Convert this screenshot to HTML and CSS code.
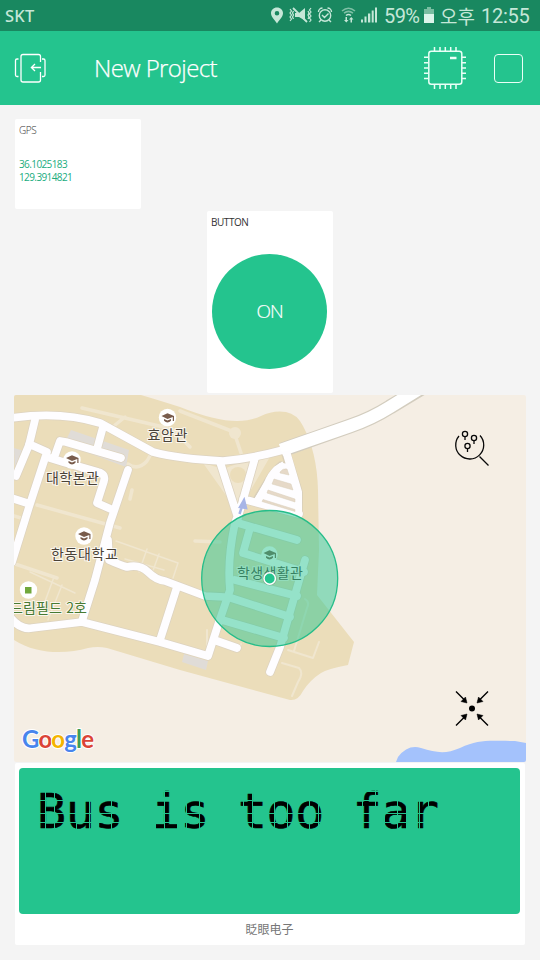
FILE: index.html
```html
<!DOCTYPE html>
<html lang="ko">
<head>
<meta charset="utf-8">
<title>New Project</title>
<link rel="stylesheet" href="styles.css">
</head>
<body>
<div class="status">
  <span class="carrier">SKT</span>
  <svg class="status-icons" width="110" height="31" viewBox="270 0 110 31">
    <path fill="#c5e7d8" fill-rule="evenodd" d="M277 7.500C273.500 7.500 271 10 271 13.300C271 17 275 20 277 23.500C279 20 283 17 283 13.300C283 10 280.500 7.500 277 7.500ZM277 11A2.300 2.300 0 1 1 277 15.600A2.300 2.300 0 1 1 277 11Z"/>
    <g fill="none" stroke="#c5e7d8" stroke-width="1.200">
      <path d="M290 9l1.500 2-1.500 2 1.500 2-1.500 2 1.500 2-1.500 2M293.500 11l-1 2 1 2-1 2 1 2M311 8l-1.500 2 1.500 2-1.500 2 1.500 2-1.500 2 1.500 2-1.500 2M308 11l1 2-1 2 1 2-1 2"/>
      <path d="M293 8l14 14" stroke-width="1.800"/>
      <circle cx="325" cy="15.500" r="5.700" stroke-width="1.400"/>
      <path d="M322 15l2.500 2.500 4-4M318.500 12a4 4 0 0 1 4-4M331.500 12a4 4 0 0 0-4-4M321 20l-2 2M329 20l2 2" stroke-width="1.400"/>
    </g>
    <path fill="#c5e7d8" d="M295 13h4l6-5v12.500l-6-3.500h-4zM361 22.500v-3h2v3zM364.500 22.500v-6h2v6zM368 22.500v-9h2.300v9zM371.700 22.500V10.500h2V22.500zM375 22.500v-15h2v15z"/>
    <g fill="none" stroke="#7fc0a5" stroke-width="1.500"><path d="M342 11Q348.500 5.500 355 11"/><path d="M344 13.200Q348.500 9.500 353 13.200"/><path d="M346 15.500Q348.500 13.500 351 15.500" stroke="#c5e7d8"/></g>
    <path fill="#c5e7d8" d="M345.500 17h1.500v3h1.500l-2.200 2.500-2.300-2.500h1.500zM350.500 22.500v-3H349l2.200-2.500 2.300 2.500H352v3z"/>
  </svg>
  <span class="percent">59%</span>
  <svg class="battery" width="10" height="31" viewBox="0 0 10 31"><path fill="#79bda1" d="M3 7h4v2h3v5H0V9h3z"/><path fill="#dcf4ea" d="M0 14h10v9H0z"/></svg>
  <span class="ampm">오후</span>
  <span class="clock">12:55</span>
</div>
<header class="bar">
  <svg class="exit" width="32" height="32" viewBox="14 52 32 32" fill="none" stroke="#fff" stroke-width="1.300">
    <path d="M40.500 62V56.500a2 2 0 0 0-2-2H23a2 2 0 0 0-2 2V80a2 2 0 0 0 2 2h15.500a2 2 0 0 0 2-2V72M41 67.500H31.500M35 64l-3.600 3.500L35 71M18.500 59H17a1.500 1.500 0 0 0-1.500 1.500v14.500a1.500 1.500 0 0 0 1.500 1.500h1.500M42 59h1.500a1.500 1.500 0 0 1 1.500 1.500v14.500a1.500 1.500 0 0 1-1.500 1.500H42"/>
  </svg>
  <h1 class="title">New Project</h1>
  <svg class="chip" width="42" height="42" viewBox="424 47 42 42" fill="none" stroke="#eafff7" stroke-width="1.500">
    <rect x="428.800" y="51.300" width="33" height="33" rx="2.500"/>
    <path d="M434.500 47v4M440 47v4M445.300 47v4M450.700 47v4M456 47v4M434.500 85v4M440 85v4M445.300 85v4M450.700 85v4M456 85v4M424 57.300h4M424 62.700h4M424 68h4M424 73.300h4M424 78.500h4M462 57.300h4M462 62.700h4M462 68h4M462 73.300h4M462 78.500h4"/>
    <path d="M450 58h6.500" stroke-width="2.500"/>
  </svg>
  <span class="stop"></span>
</header>
<main class="board">
  <section class="card gps"><h2 class="label">GPS</h2><p class="coords">36.1025183<br>129.3914821</p></section>
  <section class="card push"><h2 class="label">BUTTON</h2><button class="round">ON</button></section>
  <section class="map">
    <svg width="512" height="367" viewBox="14 395 512 367">
      <defs>
        <g id="roads" fill="none" stroke-linecap="round" stroke-linejoin="round">
          <path d="M12 418Q60 411 100 423Q120 434 153 452Q180 459 223 461Q250 459 283 450"/>
          <path d="M35 420L29 445L16 476M29 444L47 452L29 507L12 562M50 458L63 462L98 472Q106 474 104 481L97 503L113 510M54 458L60 441L66 442L121 458M103 427L97 449M128 470L110 523L95 580L82 621M8 497L30 504"/>
          <path d="M108 540L109 560Q120 565 127 567Q140 564 148 572Q156 580 165 581L205 596L224 597M10 617Q20 630 32 628L82 622L160 642L208 656L218 625L230 590Q227 560 235 523L238 515M177 587L160 640M220 462L238 518M255 458L243 500L238 517M243 499L299 514M217 641L237 648M305 560L280 647L270 672"/>
          <path d="M238 523L297 540M250 528L243 553L304 572M235 580L297 596M228 597L290 617M222 620L284 638"/>
        </g>
      </defs>
      <path fill="#f5eee4" d="M14 395h512v367H14z"/>
      <path fill="#ebddba" d="M14 395H141Q158 400 180 407Q215 421 237 421Q251 421 261 416Q273 410 286 412Q297 414 303 426Q317 452 318 490L319 550L317 595L354 642L348 665Q327 669 321 673Q310 680 303 691Q298 701 290 700L180 670L107 648Q98 646 88 648C67 654 37 655 14 640Z"/>
      <g fill="none" stroke="#f0e6cf" stroke-width="3.500" stroke-linecap="round" stroke-linejoin="round">
        <path d="M82 408L172 429L190 447M180 411L234 432L241 453M115 425L125 417M128 464Q138 471 147 461L151 454M37 505L120 528M12 563L57 578M130 499L132 490M195 541L220 542M14 516L21 518"/>
        <path stroke-width="1.500" d="M116 541L178 563L173 578M147 549L139 572M159 554L151 576M125 559L164 570M30 572L75 593M62 585L48 620M40 615L54 577"/>
        <path stroke-width="2" d="M305 599Q310 602 307 608L294 651M288 650L313 658L319 642M282 663L299 668Q304 673 298 682L292 696M236 650L241 644M207 630V646"/>
      </g>
      <g fill="#f0e6cf"><circle cx="235" cy="433" r="6"/><path d="M203 463l20 6 22-8 26-6-23 40-8 20z"/></g>
      <circle cx="238" cy="475" r="8" fill="#ebddba"/>
      <path fill="#e0dcd7" d="M71 430l58 20-3 17-62-23zM14 448l10 3-9 22zM184 654l24 7-2 9-24-8z"/>
      <use href="#roads" stroke="#ddd3c0" stroke-width="9.300"/>
      <path fill="none" stroke="#d3cdbf" stroke-width="15" d="M282 450L350 426Q371 419 390 407L425 386"/>
      <path fill="none" stroke="#d9cfba" stroke-width="9.500" stroke-linejoin="round" d="M285 450L298 492V512"/>
      <path fill="#fefdff" stroke="#d9cfba" stroke-width="1.500" d="M280 462L288 463L302 493L301 515L252 501L268 475Q273 467 280 462Z"/>
      <use href="#roads" stroke="#fefdff" stroke-width="7.700"/>
      <path fill="none" stroke="#fff" stroke-width="12.500" d="M281 450L350 426Q371 419 390 407L427 384"/>
      <path fill="none" stroke="#fefdff" stroke-width="8" stroke-linejoin="round" d="M286 451L298 492V512"/>
      <path d="M284 464l-8 5q-6 6-9 14l-10 18" fill="none" stroke="#fefdff" stroke-width="6"/>
      <g fill="#e6d9c8" stroke="#d9cfba" stroke-width=".5"><path d="M280 472q3-4 7-3l2 6-9-2zM274 479l17 5 2 6-21-6z"/><path d="M268 490l27 9v3l-28-9zM263 499.500l32 10v2l-33-10z"/></g>
      <path d="M239.500 514L243 503M240 507L244 500L246 508Z" fill="#a7b5e7" stroke="#a7b5e7" stroke-width="2.500"/>
      <path fill="#a4c2fc" d="M396 762L398 757Q408 744 421 748C437 753 446 754 460 748C480 739 487 741 515 741L526 743V762Z"/>
      <g fill="#fff"><circle cx="167.500" cy="417.500" r="8.700"/><circle cx="72" cy="460" r="8.700"/><circle cx="84" cy="536" r="8.700"/><circle cx="269.500" cy="554.500" r="8.200"/><circle cx="28.500" cy="590" r="8.700"/></g>
      <g fill="#795c4c">
        <path id="cap" d="M161.500 416l6-2.700 6.500 2.700v5h-1.200v-4l-5.300 2zM164 419l3.500 1.400 3.500-1.400v1.800q-3.500 3.500-7 0z"/>
        <use href="#cap" x="-95.500" y="42"/><use href="#cap" x="-83.500" y="118"/><use href="#cap" x="102" y="137"/>
      </g>
      <path fill="#71a83c" d="M25 587h6.500v6.500H25z"/>
      <g class="place">
        <text x="147.500" y="440" textLength="40">효암관</text>
        <text x="46" y="482.500" textLength="53">대학본관</text>
        <text x="51" y="558.500" textLength="67">한동대학교</text>
        <text x="237" y="577.500" textLength="66">학생생활관</text>
        <text class="park" x="10" y="613" textLength="77">드림필드 2호</text>
      </g>
      <circle cx="269.700" cy="578.500" r="68" fill="#24c48e" fill-opacity=".48" stroke="#25bd89" stroke-width="1.300"/>
      <circle cx="269.700" cy="578.500" r="7" fill="#658d78" opacity=".6"/><circle cx="269.700" cy="578.500" r="5.700" fill="#24c48e" stroke="#fff" stroke-width="1.500"/>
      <g fill="none" stroke="#080808" stroke-width="1.300">
        <path d="M459 436A14 14 0 1 0 480 435.500M479.500 456.500L488.500 465.500"/>
        <circle cx="465" cy="434" r="2.600"/><circle cx="474" cy="438" r="2.600"/><circle cx="467.500" cy="446" r="2.600"/><path d="M465 437v3M474 441v3M467.500 449v3"/>
      </g>
      <g stroke="#000" stroke-width="1.400"><circle cx="472" cy="708.500" r="2.300"/>
        <path d="M456 691.500L466 701.500M488 691.500L478 701.500M456 725.500L466 715.500M488 725.500L478 715.500"/>
        <path stroke-width=".5" d="M467 703l-6-1.500 4.500-4.500zM477 703l6-1.500-4.500-4.500zM467 714l-6 1.500 4.500 4.500zM477 714l6 1.500-4.500 4.500z"/></g>
      <text class="google" x="22" y="748" textLength="72"><tspan fill="#4885ed">G</tspan><tspan fill="#db4437">o</tspan><tspan fill="#f4b400">o</tspan><tspan fill="#4885ed">g</tspan><tspan fill="#3c9d58">l</tspan><tspan fill="#db4437">e</tspan></text>
    </svg>
  </section>
  <section class="card display">
    <div class="lcd"><span class="dots">Bus is too far</span></div>
    <p class="caption">眨眼电子</p>
  </section>
</main>
</body>
</html>
```
FILE: styles.css
```css
* { box-sizing: border-box; }
body { margin: 0; width: 540px; height: 960px; overflow: hidden; background: #f4f4f4; font-family: "Open Sans", "Noto Sans CJK KR", sans-serif; }
h1, h2, p { margin: 0; font-weight: 300; }
svg { display: block; flex: none; }
.status { height: 31px; display: flex; align-items: center; background: #198860; color: #c5e7d8; font: 20px/31px Roboto, "Noto Sans CJK KR", sans-serif; white-space: nowrap; }
.carrier { width: 270px; padding-left: 5px; font: 500 16.5px/31px "Noto Sans", sans-serif; letter-spacing: .3px; }
.percent { width: 44px; padding: 2px 0 0 4px; letter-spacing: -.6px; }
.battery { width: 10px; }
.ampm { width: 41px; padding-left: 6px; font: 19px/31px "Noto Sans CJK KR", sans-serif; }
.clock { padding: 2px 0 0 6px; letter-spacing: -.25px; }
.bar { height: 74px; display: flex; align-items: center; padding: 0 17px 0 14px; background: #24c48e; color: #fff; }
.title { flex: 1; padding-left: 48px; font-size: 24px; line-height: 32px; letter-spacing: -.6px; -webkit-text-stroke: .25px #fff; }
.stop { width: 29px; height: 29px; margin-left: 28px; border: 1.5px solid #eafff7; border-radius: 4px; }
.board { display: flex; flex-direction: column; padding: 14px 14px 0; }
.card { background: #fff; border-radius: 2px; }
.label { font-size: 10px; line-height: 14px; color: #333; letter-spacing: -.45px; font-weight: 400; }
.gps { width: 126px; height: 90px; margin-left: 1px; padding: 4px; }
.gps .label { font-weight: 300; }
.coords { margin-top: 21px; color: #20ac7e; font: 10px/13px "Open Sans", sans-serif; letter-spacing: -.6px; }
.push { width: 126px; height: 182px; margin: 2px auto 2px 193px; padding: 4px 5px; }
.push .label { margin-left: -1px; }
.round { display: block; width: 115px; height: 115px; margin-top: 25px; padding: 0; border: 0; border-radius: 50%; background: #24c48e; color: #fff; font: 300 19px/115px "Open Sans", sans-serif; letter-spacing: -1px; -webkit-text-stroke: .2px #fff; }
.map { width: 512px; height: 367px; border-radius: 2px; overflow: hidden; }
.place { font: 14px "Noto Sans CJK KR", sans-serif; fill: #4a4238; stroke: #fff; stroke-width: 2px; stroke-opacity: .75; paint-order: stroke; }
.place .park { fill: #477a32; }
.google { font: 700 24px Lato, sans-serif; stroke: #fff; stroke-width: 2px; paint-order: stroke; }
.display { width: 510px; height: 182px; margin: 1px 0 0 1px; padding: 5px 5px 0 4px; }
.lcd { height: 146px; padding: 15px 0 0 18px; border-radius: 4px; background: #24c48e; }
.dots { display: inline-block; position: relative; font: 48px/56px "DejaVu Sans Mono", monospace; letter-spacing: -.2px; white-space: pre; color: #000; -webkit-text-stroke: .6px #000; }
/* pixel grid of the LCD laid over the characters */
.dots::after { content: ""; position: absolute; inset: 0; background: repeating-linear-gradient(90deg, transparent 0 3.900px, #24c48e 3.900px 4.400px), repeating-linear-gradient(transparent 0 3.900px, #24c48e 3.900px 4.400px); }
.caption { font: 12px/18px "Noto Sans CJK SC", sans-serif; margin-top: 6px; text-align: center; color: #777; }
```
